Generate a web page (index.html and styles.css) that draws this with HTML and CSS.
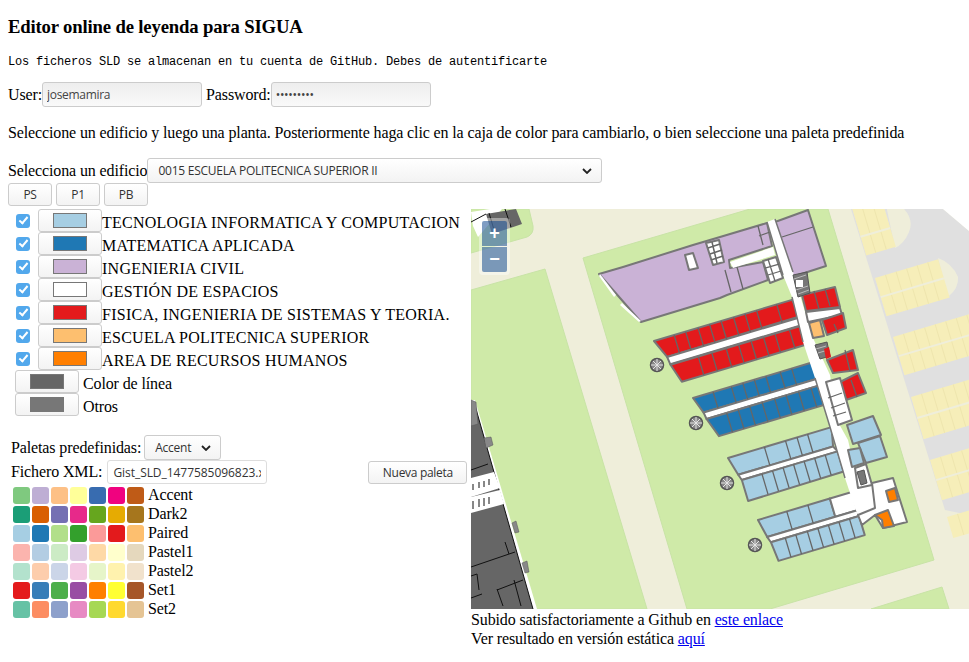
FILE: index.html
```html
<!DOCTYPE html>
<html lang="es">
<head>
<meta charset="utf-8">
<title>Editor online de leyenda para SIGUA</title>
<link rel="stylesheet" href="styles.css">
</head>
<body>
<h3 class="title">Editor online de leyenda para SIGUA</h3>
<pre class="note">Los ficheros SLD se almacenan en tu cuenta de GitHub. Debes de autentificarte</pre>
<div class="auth">
  <label for="user">User:</label><input id="user" class="field" type="text" value="josemamira">
  <label for="pass" class="pass-label">Password:</label><input id="pass" class="field" type="password" value="josemamir">
</div>
<p class="intro">Seleccione un edificio y luego una planta. Posteriormente haga clic en la caja de color para cambiarlo, o bien seleccione una paleta predefinida</p>
<div class="building">
  <label for="edificio">Selecciona un edificio</label>
  <span class="select-wrap"><select id="edificio" class="control building-select"><option>0015 ESCUELA POLITECNICA SUPERIOR II</option></select><svg class="chevron" viewBox="0 0 10 6" width="10" height="6" aria-hidden="true"><path d="M1 1l4 4 4-4"/></svg></span>
</div>
<div class="floors">
  <button class="btn floor">PS</button><button class="btn floor">P1</button><button class="btn floor">PB</button>
</div>
<div class="workspace">
  <aside class="side">
    <ul class="legend">
      <li class="legend-row"><input type="checkbox" checked><button class="btn swatch-btn"><span class="swatch c1"></span></button><span class="legend-name">TECNOLOGIA INFORMATICA Y COMPUTACION</span></li>
      <li class="legend-row"><input type="checkbox" checked><button class="btn swatch-btn"><span class="swatch c2"></span></button><span class="legend-name">MATEMATICA APLICADA</span></li>
      <li class="legend-row"><input type="checkbox" checked><button class="btn swatch-btn"><span class="swatch c3"></span></button><span class="legend-name">INGENIERIA CIVIL</span></li>
      <li class="legend-row"><input type="checkbox" checked><button class="btn swatch-btn"><span class="swatch c4"></span></button><span class="legend-name">GESTIÓN DE ESPACIOS</span></li>
      <li class="legend-row"><input type="checkbox" checked><button class="btn swatch-btn"><span class="swatch c5"></span></button><span class="legend-name">FISICA, INGENIERIA DE SISTEMAS Y TEORIA.</span></li>
      <li class="legend-row"><input type="checkbox" checked><button class="btn swatch-btn"><span class="swatch c6"></span></button><span class="legend-name">ESCUELA POLITECNICA SUPERIOR</span></li>
      <li class="legend-row"><input type="checkbox" checked><button class="btn swatch-btn"><span class="swatch c7"></span></button><span class="legend-name">AREA DE RECURSOS HUMANOS</span></li>
      <li class="legend-row plain"><button class="btn swatch-btn"><span class="swatch c8"></span></button><span class="plain-name">Color de línea</span></li>
      <li class="legend-row plain"><button class="btn swatch-btn"><span class="swatch c9"></span></button><span class="plain-name">Otros</span></li>
    </ul>
    <div class="palette-pick">
      <label for="paleta">Paletas predefinidas:</label>
      <span class="select-wrap"><select id="paleta" class="control palette-select"><option>Accent</option></select><svg class="chevron" viewBox="0 0 10 6" width="10" height="6" aria-hidden="true"><path d="M1 1l4 4 4-4"/></svg></span>
    </div>
    <div class="file-row">
      <label for="xml">Fichero XML:</label>
      <input id="xml" class="file-name" type="text" value="Gist_SLD_1477585096823.xml">
      <button class="btn new-palette">Nueva paleta</button>
    </div>
    <ul class="palettes">
      <li class="palette"><i style="background:#7fc97f"></i><i style="background:#beaed4"></i><i style="background:#fdc086"></i><i style="background:#ffff99"></i><i style="background:#386cb0"></i><i style="background:#f0027f"></i><i style="background:#bf5b17"></i><span>Accent</span></li>
      <li class="palette"><i style="background:#1b9e77"></i><i style="background:#d95f02"></i><i style="background:#7570b3"></i><i style="background:#e7298a"></i><i style="background:#66a61e"></i><i style="background:#e6ab02"></i><i style="background:#a6761d"></i><span>Dark2</span></li>
      <li class="palette"><i style="background:#a6cee3"></i><i style="background:#1f78b4"></i><i style="background:#b2df8a"></i><i style="background:#33a02c"></i><i style="background:#fb9a99"></i><i style="background:#e31a1c"></i><i style="background:#fdbf6f"></i><span>Paired</span></li>
      <li class="palette"><i style="background:#fbb4ae"></i><i style="background:#b3cde3"></i><i style="background:#ccebc5"></i><i style="background:#decbe4"></i><i style="background:#fed9a6"></i><i style="background:#ffffcc"></i><i style="background:#e5d8bd"></i><span>Pastel1</span></li>
      <li class="palette"><i style="background:#b3e2cd"></i><i style="background:#fdcdac"></i><i style="background:#cbd5e8"></i><i style="background:#f4cae4"></i><i style="background:#e6f5c9"></i><i style="background:#fff2ae"></i><i style="background:#f1e2cc"></i><span>Pastel2</span></li>
      <li class="palette"><i style="background:#e41a1c"></i><i style="background:#377eb8"></i><i style="background:#4daf4a"></i><i style="background:#984ea3"></i><i style="background:#ff7f00"></i><i style="background:#ffff33"></i><i style="background:#a65628"></i><span>Set1</span></li>
      <li class="palette"><i style="background:#66c2a5"></i><i style="background:#fc8d62"></i><i style="background:#8da0cb"></i><i style="background:#e78ac3"></i><i style="background:#a6d854"></i><i style="background:#ffd92f"></i><i style="background:#e5c494"></i><span>Set2</span></li>
    </ul>
  </aside>
  <section class="map-col">
    <div class="map">
      <svg class="map-svg" viewBox="471 209 498 400" width="498" height="400" aria-hidden="true">
        <rect class="m-cream" x="471" y="209" width="498" height="400"/>
        <!-- parking -->
        <polygon class="m-grey" points="851,209 943,209 969,231 969,515 945,510"/>
        <polygon class="m-white" points="943,209 969,209 969,231"/>
        <path class="m-cream" d="M886,205L900,205Q915,218 909,232Q904,244 895,248Z"/>
        <path class="m-cream" d="M938,258Q952,263 958,277Q959,288 948,297Z"/>
        <g class="yellow" transform="translate(849 198) rotate(-16.6)"><rect width="31" height="60"/><path class="y-line" d="M10 0v60M21 0v60"/><path class="y-gap" d="M0 40.500h31"/></g>
        <g class="yellow" transform="translate(875 278) rotate(-16.6)"><rect width="66" height="40"/><path class="y-line" d="M11 0v40M22 0v40M33 0v40M44 0v40M55 0v40"/><path class="y-gap" d="M0 20h66"/></g>
        <g class="yellow" transform="translate(893 337) rotate(-16.6)"><rect width="85" height="40"/><path class="y-line" d="M11 0v40M22 0v40M33 0v40M44 0v40M55 0v40M66 0v40M77 0v40"/><path class="y-gap" d="M0 20h85"/></g>
        <g class="yellow" transform="translate(911 397) rotate(-16.6)"><rect width="70" height="44"/><path class="y-line" d="M11 0v44M22 0v44M33 0v44M44 0v44M55 0v44"/><path class="y-gap" d="M0 22h70"/></g>
        <g class="yellow" transform="translate(930 460) rotate(-16.6)"><rect width="50" height="42"/><path class="y-line" d="M11 0v42M22 0v42M33 0v42"/><path class="y-gap" d="M0 21h50"/></g>
        <g class="yellow" transform="translate(947 517) rotate(-16.6)"><rect width="30" height="22"/><path class="y-line" d="M11 0v22"/></g>
        <!-- green -->
        <polygon class="m-green" points="583,258 750,209 828,209 934,560 770,609 687,609"/>
        <polygon class="m-green" points="471,290 545,269 647,609 471,609"/>
        <path class="m-green" d="M471,209H529L533,226Q534,234 527,237L471,253Z"/>
        <polygon class="m-green" points="942,587 949,609 871,609"/>
        <!-- top-left building -->
        <polygon class="m-white" points="471,212 490,209 502,209 478,237 473,226"/>
        <polygon class="b-dark" points="486,214 516,209 522,224 492,234"/>
        <path class="b-black" d="M489,213L495,233M505,209L511,227M471,222L486,214"/>
        <!-- bottom-left building -->
        <polygon class="m-white" points="471,400 475,400 537,609 471,609"/>
        <polygon class="b-dark" points="471,402 474,402 533,609 471,609"/>
        <path class="b-black" d="M474,402L533,609"/>
        <polygon class="m-white" points="471,478 494,472 500,488 471,497"/>
        <polygon class="m-white" points="471,497 500,490 504,504 471,513"/>
        <path class="b-black" d="M473,484v6M479,482v6M484,481v6M489,479v6M473,501v8M479,499v8M484,498v8M489,497v7"/>
        <path class="b-black" d="M471,470L488,464M471,567L515,552M509,554L505,542M471,598L482,594M471,576L477,574L479,590M497,589L503,606M514,580L521,606M497,590L523,580"/>
        <polygon class="b-grey" points="484,438 491,437 493,445 486,448"/>
        <polygon class="b-grey" points="512,523 516,521 519,532 515,533"/>
        <polygon class="b-grey" points="522,563 527,561 529,572 525,573"/>
        <polygon class="b-grey" points="471,400 476,402 478,424 471,426"/>
        <!-- purple block -->
        <polygon class="wall purple" points="599,274 623,267 693,245 720,237 767,223 772,246 729,260 730,268 763,262 768,280 727,295 720,298 641,322"/>
        <polygon class="wall purple" points="775,222 808,210 826,266 792,277"/>
        <polygon class="wall white" points="685,255 693,253 698,268 689,270"/>
        <polygon class="wall white" points="706,243 719,240 724,262 713,265"/>
        <path class="b-hatch" d="M708,248L720,244M710,254L722,250M711,260L723,256M712,242L717,263"/>
        <polygon class="m-white" points="600,274 616,295 614,297 599,276"/>
        <polygon class="m-white" points="622,303 641,321 639,322 620,305"/>
        <polygon class="m-white" points="730,262 773,247 775,255 733,268"/>
        <path class="cell" d="M758,226L763,245M759,236L770,232M782,237L813,227M725,270L731,292M737,267L743,289"/>
        <!-- red wing -->
        <g transform="translate(654 341) rotate(-16.6)">
          <polygon class="wall red" points="0,0 144,0 148,18 8,19"/>
          <polygon class="wall white" points="8,19 148,19 150,27 9,27"/>
          <polygon class="wall red" points="9,27.500 150,27.500 146,47 15,47"/>
          <path class="cell" d="M21 0v19M33 0v19M46 0v19M58 0v19M70 0v19M83 0v19M95 0v19M107 0v19M128 0v19M38 28v19M52 28v19M67 28v19M80 28v19M93 28v19M106 28v19M118 28v19M133 28v19"/>
        </g>
        <!-- blue wing -->
        <g transform="translate(693 398) rotate(-16.6)">
          <polygon class="wall blue" points="0,0 124,0 128,17 6,17"/>
          <polygon class="wall white" points="6,17 128,17 130,24 7,24"/>
          <polygon class="wall blue" points="7,24 130,24 132,44 14,44"/>
          <path class="cell" d="M21 0v17M40 0v17M52 0v17M64 0v17M76 0v17M91 0v17M103 0v17M28 24v20M40 24v20M52 24v20M65 24v20M78 24v20M90 24v20M103 24v20M116 24v20"/>
        </g>
        <!-- light blue wings -->
        <g transform="translate(728 458) rotate(-16.6)">
          <polygon class="wall sky" points="0,0 108,0 104,19 5,19"/>
          <polygon class="wall white" points="5,19 104,19 107,25 7,25"/>
          <polygon class="wall sky" points="7,25 107,25 107,46 7,47"/>
          <path class="cell" d="M38 0v19M60 0v19M72 0v19M83 0v19M28 25v21M39 25v21M50 25v21M61 25v21M72 25v21M83 25v21M94 25v21"/>
        </g>
        <g transform="translate(758 520) rotate(-16.6)">
          <polygon class="wall sky" points="0,0 75,0 75,19 4,19"/>
          <polygon class="wall white" points="75,0 98,0 98,19 75,19"/>
          <polygon class="wall white" points="4,19 98,19 98,25 6,25"/>
          <polygon class="wall sky" points="6,25 98,25 98,45 8,45"/>
          <path class="cell" d="M30 0v19M52 0v19M21 25v20M32 25v20M44 25v20M55 25v20M66 25v20M77 25v20M88 25v20"/>
        </g>
        <!-- spine -->
        <polygon class="m-white" points="767,222 775,219 793,272 800,295 808,322 813,338 830,375 838,422 848,440 855,470 860,488 887,480 889,502 895,526 883,528 875,515 862,525 855,508 845,478 830,427 815,378 803,342 792,297 783,275"/>
        <path class="wall-line" d="M767,222L783,275M775,219L793,272M792,297L803,342M815,378L830,427L845,478"/>
        <polygon class="wall white" points="763,261 776,257 783,278 770,283"/>
        <path class="cell" d="M768,259L775,281M765,268L779,264M768,275L781,271"/>
        <!-- east side red -->
        <polygon class="wall red" points="802,295 835,287 840,307 806,311"/>
        <polygon class="wall white" points="806,312 840,308 842,315 808,322"/>
        <polygon class="wall orange-l" points="809,323 820,320 824,336 813,338"/>
        <polygon class="wall red" points="822,320 843,313 846,328 827,335"/>
        <polygon class="wall red" points="827,360 853,350 858,370 833,373"/>
        <polygon class="wall red" points="840,382 858,373 866,393 846,400"/>
        <polygon class="wall white" points="826,382 840,378 852,420 838,425"/>
        <path class="cell" d="M814,291L819,309M825,289L830,306M834,324L838,333M845,350L850,371M851,380L857,397M828,398L842,393M831,408L845,403M833,416L846,412"/>
        <!-- stairs -->
        <polygon class="b-stair" points="793,275 807,272 810,293 798,297"/>
        <path class="stair-lines" d="M796,290L808,286M798,294L809,290M794,279L806,275"/>
        <rect class="m-white" x="796" y="280" width="7" height="7"/>
        <polygon class="b-stair" points="815,345 827,342 830,356 820,359"/>
        <path class="stair-lines" d="M816,349L826,346M818,353L828,350"/>
        <polygon class="red" points="824,349 829,347 831,357 826,359"/>
        <!-- south-east rooms -->
        <polygon class="wall sky" points="847,425 873,416 881,435 853,444"/>
        <polygon class="wall sky" points="858,443 880,436 887,457 866,463"/>
        <polygon class="wall sky" points="848,450 860,448 864,463 852,467"/>
        <polygon class="wall white" points="855,468 866,464 872,485 858,488"/>
        <polygon class="b-stair" points="857,472 864,470 867,483 861,485"/>
        <polygon class="wall white" points="872,483 893,478 907,522 883,528 875,515 862,525 858,515 875,508"/>
        <polygon class="wall orange" points="886,491 895,488 898,500 889,502"/>
        <polygon class="wall orange" points="875,515 888,510 894,526 883,528 882,520"/>
        <!-- trees -->
        <g class="tree"><circle cx="657" cy="365" r="6.500"/><path d="M657,359v12M651,365h12M653,361l8,8M661,361l-8,8"/></g>
        <g class="tree"><circle cx="696" cy="423" r="6.500"/><path d="M696,417v12M690,423h12M692,419l8,8M700,419l-8,8"/></g>
        <g class="tree"><circle cx="727" cy="483" r="6.500"/><path d="M727,477v12M721,483h12M723,479l8,8M731,479l-8,8"/></g>
        <g class="tree"><circle cx="755" cy="545" r="6.500"/><path d="M755,539v12M749,545h12M751,541l8,8M759,541l-8,8"/></g>
      </svg>
      <div class="zoom">
        <button class="zoom-btn">+</button>
        <button class="zoom-btn">−</button>
      </div>
    </div>
    <p class="result">Subido satisfactoriamente a Github en <a href="#">este enlace</a><br>Ver resultado en versión estática <a href="#">aquí</a></p>
  </section>
</div>
</body>
</html>
```
FILE: styles.css
```css
html, body {
  margin: 0;
  padding: 0;
  background: #fff;
}
body {
  padding-left: 8px;
  color: #000;
  font: 16px/18px "Liberation Serif", "Times New Roman", serif;
  letter-spacing: -.125px;
}
.title {
  margin: 0;
  padding-top: 16px;
  font-size: 18.72px;
  line-height: 21px;
  font-weight: bold;
  letter-spacing: -.17px;
}
.note {
  margin: 18px 0 0;
  font: 12px/14px "Liberation Mono", monospace;
  letter-spacing: -.2px;
}
.auth {
  display: flex;
  align-items: center;
  height: 25px;
  margin-top: 13px;
}
.pass-label { margin-left: 4px; }
.field {
  box-sizing: border-box;
  width: 160px;
  height: 25px;
  padding: 0 4px;
  border: 1px solid #ccc;
  border-radius: 3px;
  background: linear-gradient(#eee, #f9f9f9);
  color: #444;
  font: 12px "Open Sans", sans-serif;
  letter-spacing: -.3px;
}
.intro { margin: 17px 0 0; }
.building {
  display: flex;
  align-items: center;
  height: 25px;
  margin-top: 16px;
}
.select-wrap {
  position: relative;
  display: block;
  height: 25px;
}
.control {
  display: block;
  box-sizing: border-box;
  height: 25px;
  padding: 0 10px;
  border: 1px solid #ccc;
  border-radius: 3px;
  background: linear-gradient(#fff, #f3f3f3);
  color: #333;
  font: 12px "Open Sans", sans-serif;
  letter-spacing: -.25px;
  appearance: none;
}
.chevron {
  position: absolute;
  top: 10px;
  right: 10px;
  fill: none;
  stroke: #222;
  stroke-width: 1.800;
}
.building-select { width: 455px; }
.floors {
  display: flex;
  gap: 4px;
}
.btn {
  box-sizing: border-box;
  padding: 0;
  border: 1px solid #ccc;
  border-radius: 3px;
  background: linear-gradient(#fff, #f3f3f3);
  color: #333;
  font: 12px "Open Sans", sans-serif;
  letter-spacing: -.3px;
}
.floor {
  width: 44px;
  height: 23px;
}
.workspace {
  display: flex;
  margin-top: 3px;
}
.side { width: 463px; flex: none; }
.legend, .palettes {
  margin: 0;
  padding: 0;
  list-style: none;
}
.legend-row {
  display: flex;
  align-items: center;
  height: 23px;
  padding-left: 8px;
}
.legend-row.plain { padding-left: 7px; }
.legend-row input {
  position: relative;
  appearance: none;
  box-sizing: border-box;
  width: 14px;
  height: 14px;
  margin: 0 8px 0 0;
  border-radius: 3px;
  background: #52a8ec;
}
.legend-row input:checked::after {
  content: "";
  position: absolute;
  left: 4.500px;
  top: 1.500px;
  width: 3px;
  height: 7px;
  border: solid #fff;
  border-width: 0 2px 2px 0;
  transform: rotate(40deg);
}
.swatch-btn {
  display: flex;
  align-items: center;
  justify-content: center;
  width: 64px;
  height: 23px;
  flex: none;
}
.swatch {
  box-sizing: border-box;
  display: block;
  width: 34px;
  height: 15px;
  border: 1px solid #777;
}
.c1 { background: #a6cee3; }
.c2 { background: #1f78b4; }
.c3 { background: #cab2d6; }
.c4 { background: #fff; }
.c5 { background: #e31a1c; }
.c6 { background: #fdbf6f; }
.c7 { background: #ff7f00; }
.c8 { background: #666; }
.c9 { background: #777; }
.legend-name {
  padding-top: 4px;
  white-space: nowrap;
  letter-spacing: .25px;
}
.plain-name {
  margin-left: 4px;
  padding-top: 4px;
}
.palette-pick {
  display: flex;
  align-items: center;
  gap: 3px;
  height: 25px;
  margin: 19px 0 0 3px;
}
.palette-select { width: 77px; }
.file-row {
  display: flex;
  align-items: center;
  height: 24px;
  margin-left: 3px;
}
.file-name {
  box-sizing: border-box;
  width: 160px;
  height: 24px;
  margin-left: 5px;
  padding: 0 5px;
  border: 1px solid #ddd;
  border-radius: 3px;
  color: #333;
  font: 12px "Open Sans", sans-serif;
  letter-spacing: -.05px;
}
.new-palette {
  width: 99px;
  height: 23px;
  margin-left: 101px;
}
.palettes { margin: 2px 0 0 5px; }
.palette {
  display: flex;
  align-items: center;
  gap: 2px;
  height: 19px;
}
.palette i {
  display: block;
  width: 17px;
  height: 17px;
  border-radius: 3px;
}
.palette span {
  margin-left: 2px;
  padding-bottom: 2px;
}
.map-col {
  width: 498px;
  flex: none;
}
.map {
  position: relative;
  height: 400px;
  overflow: hidden;
}
.map-svg { display: block; }
.result { margin: 1px 0 0; line-height: 19px; }
.zoom {
  position: absolute;
  top: 9px;
  left: 8px;
  display: flex;
  flex-direction: column;
  gap: 1px;
  padding: 3px;
  border-radius: 4px;
  background: rgba(255, 255, 255, .4);
}
.zoom-btn {
  width: 25px;
  height: 25px;
  padding: 0;
  border: 0;
  background: rgba(0, 60, 136, .5);
  color: #fff;
  font: bold 18px/25px "Liberation Sans", sans-serif;
}
.zoom-btn:first-child { border-radius: 2px 2px 0 0; }
.zoom-btn:last-child { border-radius: 0 0 2px 2px; }
.m-cream { fill: #efeeda; }
.m-grey { fill: #e0e0e0; }
.m-white { fill: #fff; }
.m-green { fill: #cfeaa8; stroke: #c8e3a6; stroke-width: 1; }
.yellow rect { fill: #f6eeb9; }
.y-line { stroke: #eee5ae; stroke-width: 1; fill: none; }
.y-gap { stroke: #efeeda; stroke-width: 2; fill: none; }
.wall { stroke: #777; stroke-width: 2; stroke-linejoin: round; }
.wall-line { stroke: #777; stroke-width: 1.500; fill: none; }
.cell { stroke: #666; stroke-width: 1.300; fill: none; }
.purple { fill: #cab2d6; }
.red { fill: #e31a1c; }
.blue { fill: #1f78b4; }
.sky { fill: #a6cee3; }
.white { fill: #fff; }
.orange { fill: #ff7f00; }
.orange-l { fill: #fdbf6f; }
.b-dark { fill: #666; }
.b-grey { fill: #888; stroke: #555; stroke-width: .5; }
.b-black { stroke: #111; stroke-width: 1; fill: none; }
.b-hatch { stroke: #666; stroke-width: 1.500; fill: none; }
.b-stair { fill: #777; stroke: #555; stroke-width: 1; }
.stair-lines { stroke: #ccc; stroke-width: .8; fill: none; }
.tree circle { fill: #888; stroke: #555; stroke-width: 1.500; }
.tree path { stroke: #e4e4e4; stroke-width: 1; fill: none; }
```
